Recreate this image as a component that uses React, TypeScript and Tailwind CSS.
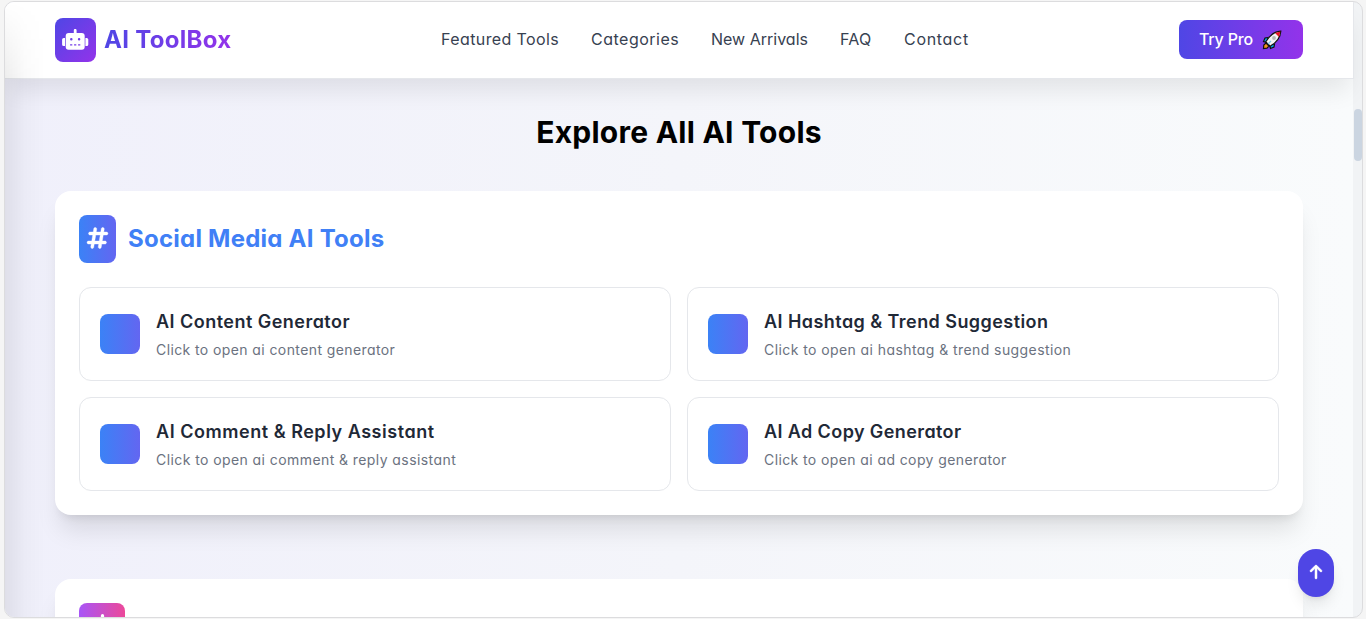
import React from "react";
import { FaHashtag, FaArrowUp } from "react-icons/fa6";

const tools = [
  { title: "AI Content Generator", text: "Click to open ai content generator", t: "tracking-[0.47px]", s: "tracking-[0.4px]" },
  { title: "AI Hashtag & Trend Suggestion", text: "Click to open ai hashtag & trend suggestion", t: "tracking-[0.44px]", s: "tracking-[0.42px]" },
  { title: "AI Comment & Reply Assistant", text: "Click to open ai comment & reply assistant", t: "tracking-[0.53px]", s: "tracking-[0.42px]" },
  { title: "AI Ad Copy Generator", text: "Click to open ai ad copy generator", t: "tracking-[0.4px]", s: "tracking-[0.4px]" },
];

const links = [
  { label: "Featured Tools", c: "w-[118px] tracking-[0.4px]" },
  { label: "Categories", c: "w-[88px] tracking-[0.5px]" },
  { label: "New Arrivals", c: "w-[97px]" },
  { label: "FAQ", c: "w-[32px] tracking-[0.3px]" },
  { label: "Contact", c: "w-[65px] tracking-[0.7px]" },
];

function Robot({ className }: { className: string }) {
  return (
    <svg viewBox="0 0 26.4 21" className={className} fill="currentColor">
      <path
        fillRule="evenodd"
        d="M6.700 4H11.800V1.300a1.400 1.400 0 0 1 2.800 0V4H19.700a3 3 0 0 1 3 3V17.800a2.900 2.900 0 0 1-2.900 2.900H6.600a2.900 2.900 0 0 1-2.900-2.900V7a3 3 0 0 1 3-3ZM9.300 9.100a1.250 1.250 0 1 0 0 2.500 1.250 1.250 0 0 0 0-2.500ZM17.100 9.100a1.250 1.250 0 1 0 0 2.500 1.250 1.250 0 0 0 0-2.500ZM8.100 15.300V16.500H10.300V15.300ZM12.100 15.300V16.500H14.300V15.300ZM16.100 15.300V16.500H18.300V15.300Z"
      />
      <path d="M3 9V17H1.700A1.600 1.600 0 0 1 .1 15.400V10.600A1.600 1.600 0 0 1 1.700 9ZM23.400 9V17h1.300a1.600 1.600 0 0 0 1.600-1.600V10.600A1.600 1.600 0 0 0 24.700 9Z" />
    </svg>
  );
}

function Rocket() {
  return (
    <svg viewBox="0 0 20 20" className="h-5 w-5">
      <path d="M6 7.500 3 8 1.500 11.500 5 12.500ZM7.500 15 8.500 18.500 12 17 12.500 14Z" fill="#00a4e4" stroke="#111" strokeWidth="1.200" />
      <path d="M4 13 1.800 15 1.500 18.500 5 18.200 7 16Z" fill="#f7941d" stroke="#111" strokeWidth="1.200" />
      <path d="M18.800 1.200C13 1.500 8.500 4 3.800 11.800L8.200 16.200C16 11.500 18.500 7 18.800 1.200Z" fill="#f4f4f4" stroke="#111" strokeWidth="1.200" />
      <path d="M18.400 1.600 13 3 17 7Z" fill="#e81224" />
      <circle cx="12" cy="8" r="1.900" fill="#b8b8b8" />
      <path d="M6 14 9 11" stroke="#7cc8ea" strokeWidth="1.200" />
    </svg>
  );
}

export default function App() {
  return (
    <div className="h-[619px] overflow-hidden bg-[#f5f5f5] pt-px pl-1 pr-[3px] pb-px font-['Inter','Open_Sans',sans-serif] [font-feature-settings:'cv11']">
      <div className="relative flex h-full overflow-hidden rounded-[10px] border border-[#dcdcde] bg-[#f1f3f5]">
        <div className="relative flex w-[1348px] shrink-0 flex-col bg-linear-to-r/srgb from-[#f0f0fb] via-[#f4f5fa] to-[#f9fbfc]">
          <header className="relative z-10 flex h-[77px] w-[1349px] shrink-0 items-center justify-between border-r border-b border-[#e5e7eb] bg-white px-[50px] shadow-[0_16px_25px_-5px_rgba(0,0,0,0.085)]">
            <div className="flex w-44 items-center gap-2">
              <div className="flex h-11 w-[41px] shrink-0 items-center justify-center rounded-lg bg-linear-to-br/srgb from-[#4f46e5] to-[#9333ea] text-white">
                <Robot className="-mt-px h-[21px] w-[26.4px] shrink-0" />
              </div>
              <span className="bg-linear-to-r/srgb from-[#4f46e5] to-[#9333ea] bg-clip-text text-2xl font-bold tracking-[0.3px] whitespace-nowrap text-transparent">AI ToolBox</span>
            </div>
            <nav className="flex gap-8 pb-[2px] text-base text-[#374151]">
              {links.map((l) => (
                <span key={l.label} className={"whitespace-nowrap " + l.c}>{l.label}</span>
              ))}
            </nav>
            <button className="-mt-px flex h-[39px] w-[124px] items-center rounded-lg bg-linear-to-r/srgb from-[#4f46e5] to-[#9333ea] pl-5 text-left text-base font-medium text-white">
              <span className="w-[63px] pb-px tracking-[-0.2px] whitespace-nowrap">Try Pro</span>
              <Rocket />
            </button>
          </header>
          <main className="px-[50px]">
            <h2 className="mt-[35px] mb-[41px] text-center text-3xl leading-9 font-bold tracking-[0.25px] text-black">Explore All AI Tools</h2>
            <section className="h-[324px] rounded-2xl bg-white p-6 shadow-[0_20px_25px_-5px_rgba(0,0,0,0.1),0_8px_10px_-6px_rgba(0,0,0,0.1)]">
              <div className="mb-6 flex items-center gap-3">
                <div className="flex h-12 w-[37px] items-center justify-center rounded-lg bg-linear-to-r/srgb from-[#3b82f6] to-[#6366f1] text-white">
                  <FaHashtag className="-mt-0.5 h-6 w-[21px] overflow-visible stroke-white stroke-[8px]" />
                </div>
                <h3 className="text-2xl font-bold tracking-[0.24px] text-[#4080f6]">Social Media AI Tools</h3>
              </div>
              <div className="grid grid-cols-2 gap-4">
                {tools.map((t) => (
                  <div key={t.title} className="flex h-[94px] items-center gap-4 rounded-xl border border-[#e5e7eb] px-5">
                    <div className="h-10 w-10 rounded-lg bg-linear-to-r/srgb from-[#3b82f6] to-[#6366f1]" />
                    <div>
                      <h4 className={"text-lg leading-7 font-semibold text-[#1f2937] " + t.t}>{t.title}</h4>
                      <p className={"mt-1 text-sm text-[#6b7280] " + t.s}>{t.text}</p>
                    </div>
                  </div>
                ))}
              </div>
            </section>
            <section className="mt-16 h-[200px] rounded-2xl bg-white p-6 shadow-xl">
              <div className="flex h-12 w-[46px] items-center justify-center rounded-lg bg-linear-to-r/srgb from-[#a855f7] to-[#ec4899] text-white">
                <Robot className="-mt-0.5 h-[25px] w-[31px]" />
              </div>
            </section>
          </main>
          <div className="pointer-events-none absolute inset-y-0 left-0 z-20 w-10 bg-linear-to-r from-black/7 via-black/2 to-transparent mask-t-from-[540px] mask-t-to-100%" />
          <button className="absolute right-[19px] bottom-5 flex h-12 w-9 items-center justify-center rounded-full bg-[#4f46e5] pb-0.5 text-white shadow-lg">
            <FaArrowUp className="h-4 w-3.5 overflow-visible stroke-white stroke-[16px]" />
          </button>
        </div>
        <div className="flex-1 pt-[107px]">
          <div className="ml-px h-[52px] rounded-full bg-[#cbd5e1]" />
        </div>
      </div>
    </div>
  );
}
